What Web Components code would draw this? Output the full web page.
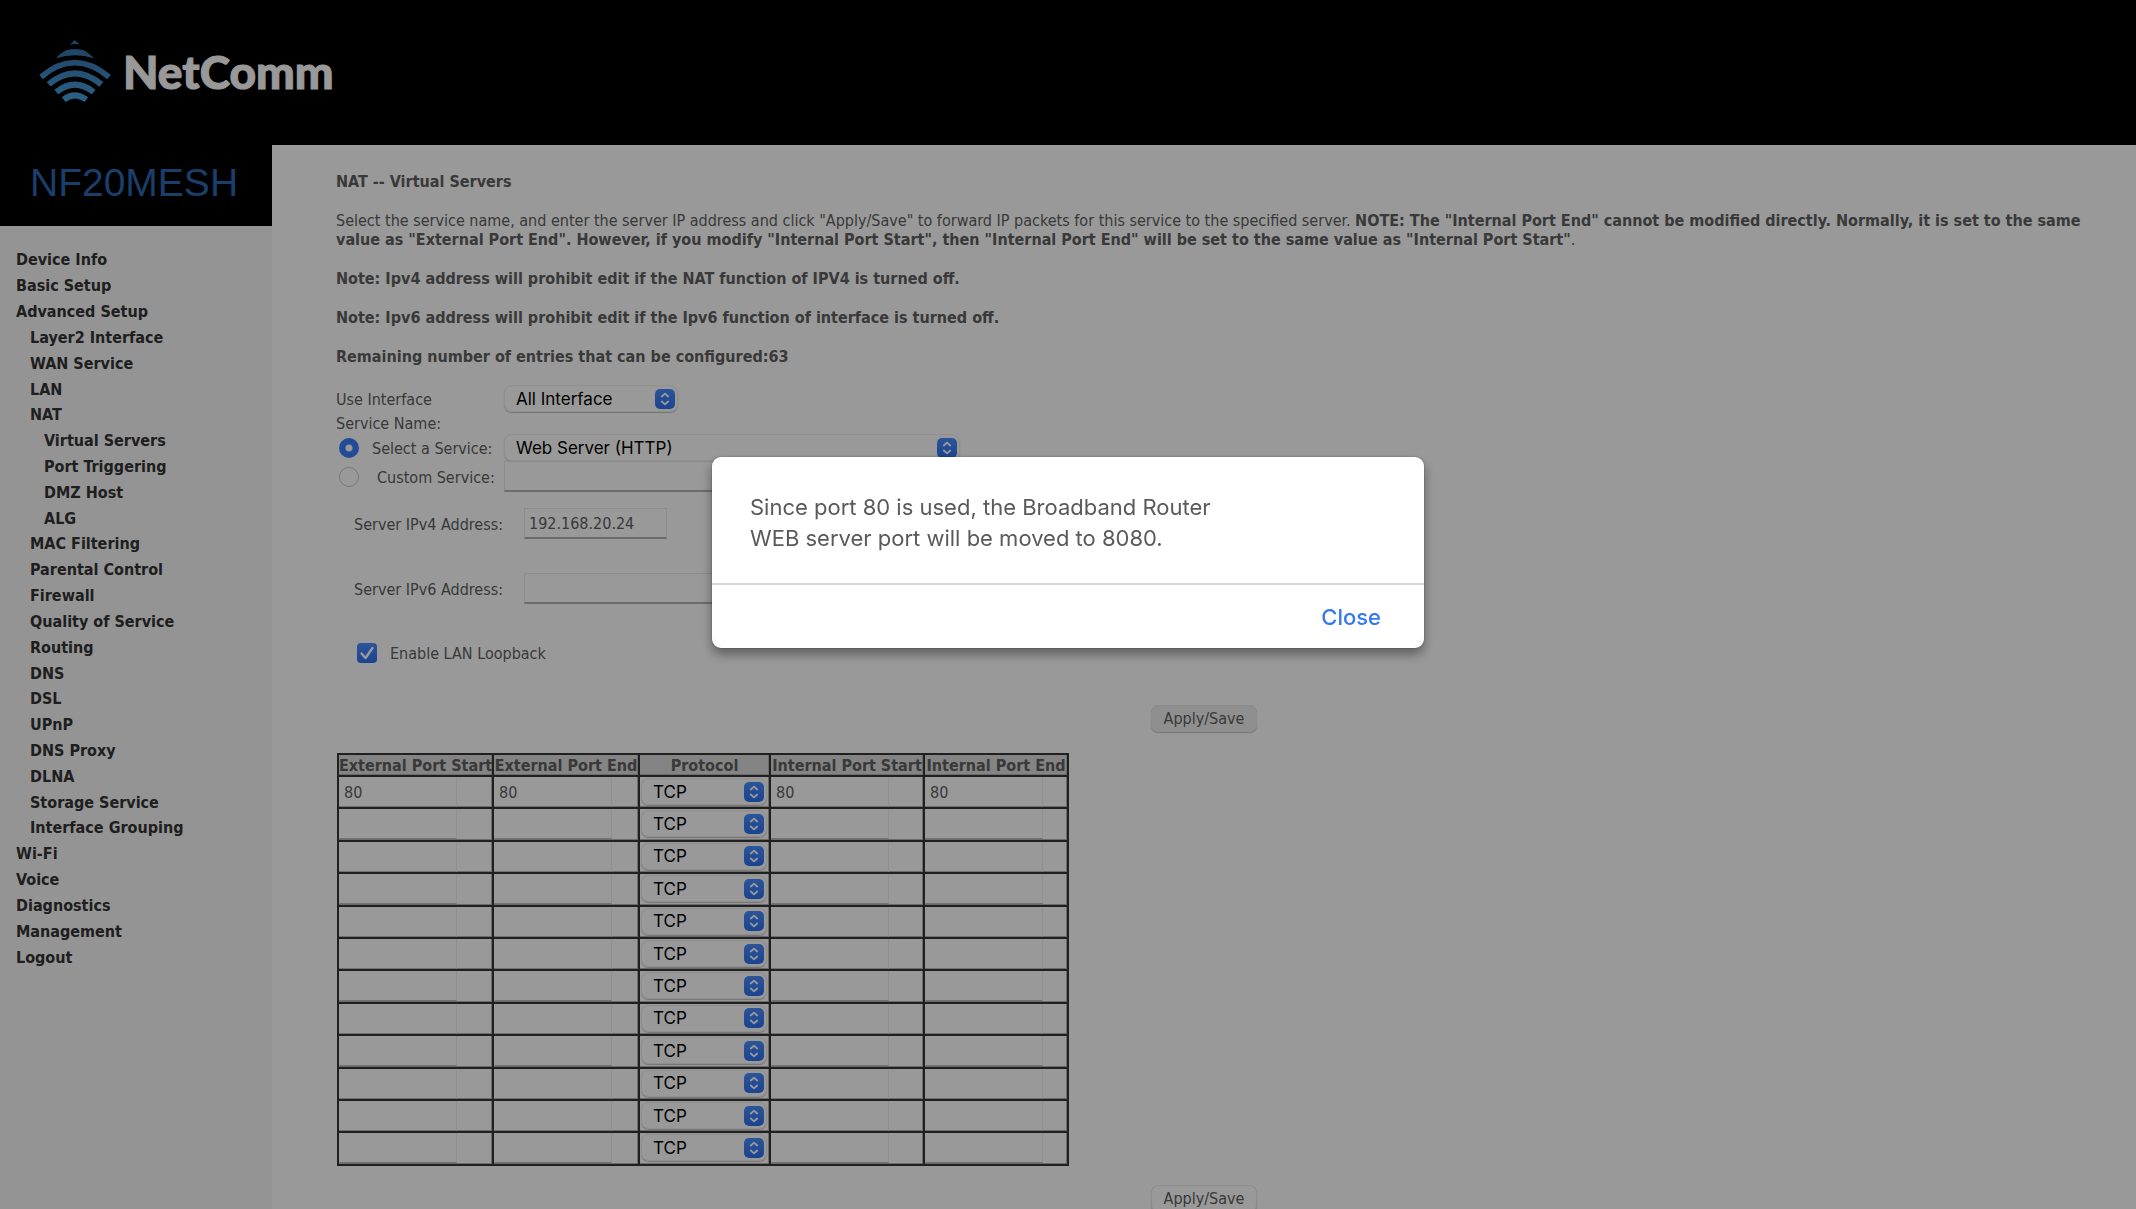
<!DOCTYPE html>
<html lang="en">
<head>
<meta charset="utf-8">
<title>NF20MESH - NAT Virtual Servers</title>
<style>
html, body { margin: 0; height: 100%; }
body { background: #fff; overflow: hidden; font: 16px/19px "DejaVu Sans Condensed", "DejaVu Sans", sans-serif; color: #606060; }
</style>
</head>
<body>
<router-app></router-app>
<script>
const define = (name, html, setup) => {
  const template = document.createElement('template');
  template.innerHTML = html;
  customElements.define(name, class extends HTMLElement {
    constructor() {
      super();
      this.attachShadow({ mode: 'open' }).append(template.content.cloneNode(true));
    }
    connectedCallback() { if (setup) setup(this, this.shadowRoot); }
  });
};

const controls = `
  * { box-sizing: border-box; }
  input, select, button { margin: 0; font: inherit; color: inherit; }
  input[type=text] { height: 31px; padding: 2px 4px; border: 1px solid #eaeaea; border-bottom: 2px solid #b4b4b4; border-radius: 0; background: transparent; outline: 0; }
  .pick { display: inline-grid; align-items: center; }
  .pick > * { grid-area: 1 / 1; }
  .pick select { appearance: none; width: 100%; height: 27px; padding: 0 30px 0 11px; border: 1px solid #eee; border-radius: 8px; background: transparent; box-shadow: 0 1px 1px #c4c4c4; font: 17px/24px Inter, sans-serif; color: #000; outline: 0; }
  .pick svg { justify-self: end; margin-right: 3px; width: 20px; height: 20px; pointer-events: none; }
`;
const pick = (attrs, options) => `<span class="pick"><select ${attrs}>${options.map(o => `<option>${o}</option>`).join('')}</select>
  <svg viewBox="0 0 20 20" aria-hidden="true"><defs><linearGradient id="g" x2="0" y2="1"><stop stop-color="#4a8cff"/><stop offset="1" stop-color="#2f70f0"/></linearGradient></defs><rect width="20" height="20" rx="5" fill="url(#g)"/><path d="M6.800 7.500 10 4.600l3.200 2.900M6.800 12.500 10 15.400l3.200-2.900" fill="none" stroke="#fff" stroke-width="1.800" stroke-linecap="round" stroke-linejoin="round"/></svg></span>`;

define('brand-logo', `
<style>
  :host { display: flex; align-items: center; gap: 12px; color: #fff; font: 900 46px/52px Lato, sans-serif; }
  svg { width: 72px; height: 64px; }
  span { -webkit-text-stroke: 1px #fff; }
</style>
<svg viewBox="116 120 216 192" fill="none" stroke-linecap="butt" aria-hidden="true">
  <defs><linearGradient id="b" gradientUnits="userSpaceOnUse" x1="0" y1="118" x2="0" y2="305"><stop stop-color="#33699f"/><stop offset="1" stop-color="#4aa2e0"/></linearGradient></defs>
  <path fill="url(#b)" d="M209 134 220 122q3-3 6 0l12 12q-14-4-29 0zM167 175q14-16 30-24 26-8 53 0 14 7 31 24-57-19-114 0z"/>
  <g stroke="url(#b)">
    <path stroke-width="17" d="M122 231Q223 145 326 231"/>
    <path stroke-width="18" d="M145 253Q223 187 303 253"/>
    <path stroke-width="18" d="M168 276Q223 232 280 276"/>
    <path stroke-width="18" d="M190 299Q223 273 258 299"/>
  </g>
</svg>
<span>NetComm</span>`);

define('app-header', `
<style>:host { display: flex; align-items: center; box-sizing: border-box; height: 145px; padding: 0 39px 2px; background: #000; }</style>
<brand-logo></brand-logo>`);

define('nav-link', `
<style>
  :host { display: flex; align-items: center; }
  :host([level="2"]) { padding-left: 14px; }
  :host([level="3"]) { padding-left: 28px; }
  a { color: inherit; text-decoration: none; white-space: nowrap; }
</style>
<a href="#"><slot></slot></a>`);

define('side-nav', `
<style>
  :host { display: block; background: #f7f7f7; }
  h1 { margin: 0; height: 81px; padding-left: 30px; background: #000; color: #2b69b2; font: 39px/76px "Liberation Sans", Arial, sans-serif; }
  nav { display: grid; grid-auto-rows: 1fr; height: 723px; margin: 21px 0 0 16px; font-weight: bold; color: #343434; }
</style>
<h1>NF20MESH</h1>
<nav aria-label="Main"></nav>`, (host, root) => {
  const items = [[1, 'Device Info'], [1, 'Basic Setup'], [1, 'Advanced Setup'], [2, 'Layer2 Interface'], [2, 'WAN Service'], [2, 'LAN'], [2, 'NAT'], [3, 'Virtual Servers'], [3, 'Port Triggering'], [3, 'DMZ Host'], [3, 'ALG'], [2, 'MAC Filtering'], [2, 'Parental Control'], [2, 'Firewall'], [2, 'Quality of Service'], [2, 'Routing'], [2, 'DNS'], [2, 'DSL'], [2, 'UPnP'], [2, 'DNS Proxy'], [2, 'DLNA'], [2, 'Storage Service'], [2, 'Interface Grouping'], [1, 'Wi-Fi'], [1, 'Voice'], [1, 'Diagnostics'], [1, 'Management'], [1, 'Logout']];
  root.querySelector('nav').innerHTML = items.map(([level, text]) => `<nav-link level="${level}">${text}</nav-link>`).join('');
});

define('page-notes', `
<style>
  :host { display: flex; flex-direction: column; gap: 20px; }
  p, h2 { margin: 0; font-size: inherit; }
</style>
<h2>NAT -- Virtual Servers</h2>
<p>Select the service name, and enter the server IP address and click "Apply/Save" to forward IP packets for this service to the specified server. <b>NOTE: The "Internal Port End" cannot be modified directly. Normally, it is set to the same value as "External Port End". However, if you modify "Internal Port Start", then "Internal Port End" will be set to the same value as "Internal Port Start"</b>.</p>
<p><b>Note: Ipv4 address will prohibit edit if the NAT function of IPV4 is turned off.</b></p>
<p><b>Note: Ipv6 address will prohibit edit if the Ipv6 function of interface is turned off.</b></p>
<p><b>Remaining number of entries that can be configured:63</b></p>`);

define('service-form', `
<style>
  ${controls}
  :host { display: block; }
  form { display: flex; flex-direction: column; }
  label { padding-top: 2px; }
  .row { display: grid; grid-template-columns: 168px auto; justify-content: start; align-items: center; }
  .name { height: 22px; line-height: 24px; }
  .choice { display: flex; align-items: center; gap: 13px; padding-left: 3px; }
  .custom .choice { gap: 18px; }
  .address { grid-template-columns: 170px auto; padding-left: 18px; margin-top: 16px; }
  .address + .address { margin-top: 34px; }
  .loop { display: flex; align-items: center; gap: 13px; margin: 38px 0 0 21px; }
  [type=radio] { appearance: none; width: 20px; height: 20px; border: 1px solid #c8c8c8; border-radius: 50%; }
  [type=radio]:checked { border: 0; background: radial-gradient(circle, #fff 3px, #3b7dfa 4px); }
  .tick { display: grid; }
  .tick > * { grid-area: 1 / 1; width: 20px; height: 20px; }
  .tick input { appearance: none; border-radius: 4px; background: linear-gradient(#4a8cff, #2f70f0); }
  .tick svg { pointer-events: none; }
  .w1 .pick { width: 174px; }
  .w2 .pick { width: 456px; }
  .long { width: 400px; }
  #v4 { width: 143px; }
</style>
<form>
  <div class="row w1"><label for="iface">Use Interface</label>${pick('id="iface"', ['All Interface'])}</div>
  <div class="name">Service Name:</div>
  <div class="row w2"><span class="choice"><input type="radio" name="kind" id="kind1" checked><label for="kind1">Select a Service:</label></span>${pick('aria-label="Service"', ['Web Server (HTTP)'])}</div>
  <div class="row custom"><span class="choice"><input type="radio" name="kind" id="kind2"><label for="kind2">Custom Service:</label></span><input type="text" class="long" aria-label="Custom service name"></div>
  <div class="row address"><label for="v4">Server IPv4 Address:</label><input type="text" id="v4" value="192.168.20.24"></div>
  <div class="row address"><label for="v6">Server IPv6 Address:</label><input type="text" class="long" id="v6"></div>
  <div class="loop"><span class="tick"><input type="checkbox" id="loop" checked><svg viewBox="0 0 20 20" aria-hidden="true"><path d="M4.500 10.500 8.500 15 15.500 5" fill="none" stroke="#fff" stroke-width="2.400" stroke-linecap="round" stroke-linejoin="round"/></svg></span><label for="loop">Enable LAN Loopback</label></div>
</form>`);

define('port-table', `
<style>
  ${controls}
  :host { display: block; }
  table { width: 732px; height: 413px; table-layout: fixed; border-collapse: collapse; }
  th, td { padding: 0; border: 2px solid #363636; box-shadow: inset -1px -1px #b4b4b4; }
  th { height: 22px; background: #dcdcdc; line-height: 19px; white-space: nowrap; }
  td { vertical-align: top; height: 30px; }
  td input[type=text] { display: block; width: 118px; height: 30px; border-color: transparent #f0f0f0 #bdbdbd transparent; border-bottom-width: 1px; }
  .pick { display: grid; margin: 1px 2px 0 1px; }
</style>
<table>
  <colgroup><col style="width:155px"><col style="width:146px"><col style="width:131px"><col style="width:154px"><col></colgroup>
  <thead><tr><th>External Port Start</th><th>External Port End</th><th>Protocol</th><th>Internal Port Start</th><th>Internal Port End</th></tr></thead>
  <tbody></tbody>
</table>`, (host, root) => {
  const cell = (label, row) => `<td><input type="text" aria-label="${label} ${row + 1}" value="${row ? '' : 80}"></td>`;
  root.querySelector('tbody').innerHTML = Array.from({ length: 12 }, (_, row) =>
    `<tr>${cell('External port start', row)}${cell('External port end', row)}<td>${pick(`aria-label="Protocol ${row + 1}"`, ['TCP'])}</td>${cell('Internal port start', row)}${cell('Internal port end', row)}</tr>`).join('');
});

define('save-button', `
<style>
  :host { display: flex; justify-content: center; }
  button { height: 27px; padding: 0 12px; border: 1px solid #eaeaea; border-radius: 7px; background: #fff; box-shadow: 0 1px 1px #c4c4c4; font: inherit; color: inherit; }
  :host([pressed]) button { background: #efefef; }
</style>
<button type="button"><slot></slot></button>`);

define('message-dialog', `
<style>
  :host { position: fixed; inset: 0; display: flex; justify-content: center; align-items: flex-start; padding-top: 457px; background: rgb(0 0 0 / 40%); }
  section { width: 712px; border-radius: 9px; background: #fff; box-shadow: 0 6px 12px rgb(0 0 0 / 40%), 0 0 2px rgb(0 0 0 / 30%); font: 22px/31px Inter, sans-serif; color: #5a5a5a; overflow: hidden; }
  p { margin: 0; padding: 35px 38px 29px; white-space: pre-line; }
  footer { display: flex; justify-content: flex-end; padding: 17px 43px 15px; border-top: 2px solid #d6d6d6; }
  button { padding: 0; border: 0; background: none; font: 500 22px/31px Inter, sans-serif; color: #3478f6; }
</style>
<section role="alertdialog" aria-modal="true" aria-labelledby="msg">
  <p id="msg"><slot></slot></p>
  <footer><button type="button">Close</button></footer>
</section>`);

define('router-app', `
<style>
  :host { display: flex; flex-direction: column; height: 100vh; overflow: hidden; }
  .body { display: grid; grid-template-columns: 272px 1fr; flex: 1; min-height: 0; }
  main { padding: 27px 64px 0; }
  page-notes { margin-right: -24px; }
  service-form { margin: 19px 0 42px; }
  port-table { margin: 21px 0 19px 1px; }
</style>
<app-header></app-header>
<div class="body">
  <side-nav></side-nav>
  <main>
    <page-notes></page-notes>
    <service-form></service-form>
    <save-button pressed>Apply/Save</save-button>
    <port-table></port-table>
    <save-button>Apply/Save</save-button>
  </main>
</div>
<message-dialog>Since port 80 is used, the Broadband Router
WEB server port will be moved to 8080.</message-dialog>`);
</script>
</body>
</html>
